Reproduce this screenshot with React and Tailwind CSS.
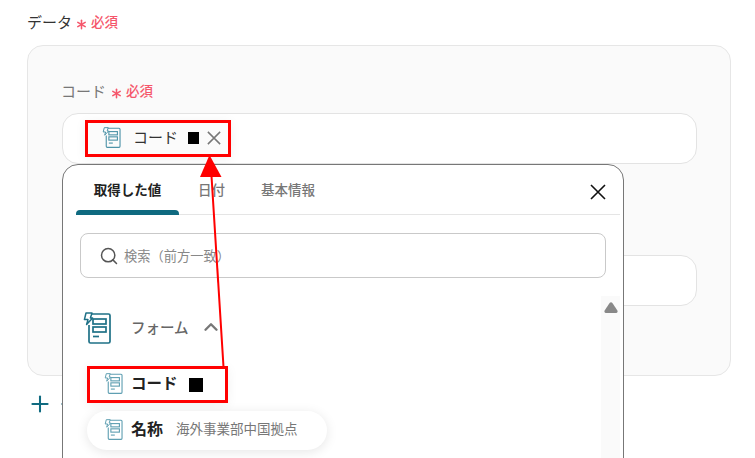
import React from "react";
import { ChevronUp, Plus, Search, Asterisk } from "lucide-react";

const font = { fontFamily: '"Noto Sans CJK JP", "Noto Sans", sans-serif' };

function FormIcon({ className }) {
  return (
    <svg viewBox="0 0 28 32" fill="none" className={className}>
      <path d="M8 2H25.5C26.6 2 27 2.6 27 3.5V29.5C27 30.4 26.4 31 25.5 31H7.5C6.5 31 6 30.4 6 29.5V13" stroke="currentColor" strokeWidth="1.7" strokeLinejoin="round" />
      <path d="M3 1H9L7.4 6H9.6L3.6 12.5L5 7.6H1.4L3 1Z" fill="#fff" stroke="currentColor" strokeWidth="1.5" strokeLinejoin="round" />
      <rect x="10" y="7" width="13" height="5" stroke="currentColor" strokeWidth="1.7" />
      <rect x="10" y="15" width="13" height="5" stroke="currentColor" strokeWidth="1.7" />
      <path d="M10 24.5H16" stroke="currentColor" strokeWidth="1.7" />
    </svg>
  );
}

function CloseIcon({ className, strokeWidth }) {
  return (
    <svg viewBox="0 0 16 16" fill="none" className={className}>
      <path d="M1 1L15 15M15 1L1 15" stroke="currentColor" strokeWidth={strokeWidth} />
    </svg>
  );
}

function Required() {
  return (
    <span className="flex items-center text-[13.5px] font-medium text-[#f5566b] leading-none">
      <Asterisk className="w-[17px] h-[17px] -ml-[1px] mr-[1px] mt-[4px]" strokeWidth={2.2} />
      必須
    </span>
  );
}

export default function App() {
  return (
    <div style={font} className="relative w-[755px] h-[458px] overflow-hidden bg-white text-[#333]">
      <div className="pl-[27px] pt-[11px] w-[731px]">
        <div className="flex items-center gap-[2px] h-[22px] text-[15px] text-[#333]">
          データ
          <Required />
        </div>

        <div className="mt-[12px] h-[331px] rounded-[16px] border border-[#e6e6e6] bg-[#fafafa] pl-[34px] pr-[33px] pt-[34px]">
          <div className="flex items-center gap-[3px] h-[22px] text-[15px] text-[#777]">
            <span className="-ml-[1px]">コード</span>
            <Required />
          </div>
          <div className="mt-[11px] flex items-center h-[51px] rounded-[16px] border border-[#e3e3e3] bg-white pl-[22px]">
            <div className="flex items-center w-[146px] h-[37px] border-[3px] border-[#f00] bg-[#fbfbfb] pl-[14px] pb-[2px] shadow-[0_2px_12px_rgba(0,0,0,0.06)]">
              <FormIcon className="w-[19px] h-[21px] text-[#4d93a8]" />
              <span className="ml-[12px] text-[15px] leading-none pb-[2px] text-[#333]">コード</span>
              <span className="ml-[10px] w-[11px] h-[12px] bg-black" />
              <CloseIcon className="ml-[8px] w-[14px] h-[14px] text-[#777]" strokeWidth={1.7} />
            </div>
          </div>
          <div className="mt-[91px] h-[51px] rounded-[16px] border border-[#e3e3e3] bg-white" />
        </div>

        <div className="mt-[15px] flex items-center">
          <Plus className="w-[26px] h-[26px] text-[#0f6a80]" strokeWidth={1.9} />
          <span className="ml-[8px] w-[1px] h-[2px] bg-[#9bbcc6]" />
        </div>
      </div>

      {/* variable picker popup */}
      <div className="absolute left-[62px] top-[164px] w-[562px] h-[310px] rounded-t-[16px] border border-[#777] bg-white">
        <div className="relative flex h-[50px] ml-[13px] mr-[3px] border-b border-[#e5e5e5] text-[13.5px] font-medium">
          <div className="relative w-[103px] flex items-center justify-center text-[#222] font-bold">
            取得した値
            <span className="absolute left-0 -bottom-px w-[103px] h-[5px] rounded-t-[4px] bg-[#0f6a80]" />
          </div>
          <div className="ml-[19px] flex items-center text-[#777]">日付</div>
          <div className="ml-[36px] flex items-center text-[#777]">基本情報</div>
          <CloseIcon className="absolute right-[14px] top-[19px] w-[16px] h-[16px] text-[#111]" strokeWidth={1.6} />
        </div>

        <div className="mt-[18px] ml-[17px] w-[526px] h-[45px] flex items-center rounded-[8px] border border-[#c9c9c9] pl-[18px] text-[13.25px] text-[#888]">
          <Search className="w-[20px] h-[20px] text-[#555]" strokeWidth={1.8} />
          <span className="ml-[5px]">検索（前方一致）</span>
        </div>

        <div className="relative mt-[34px] ml-[20px] flex items-center h-[32px]">
          <FormIcon className="w-[28px] h-[32px] text-[#1f7187]" />
          <span className="ml-[20px] text-[14.5px] font-medium text-[#666] pb-[3px]">フォーム</span>
          <ChevronUp className="ml-[11px] mb-[2px] w-[22px] h-[22px] text-[#777]" strokeWidth={2.6} />
        </div>

        <div className="absolute right-[3px] top-[131px] bottom-0 w-[19px] bg-[#fafafa] flex justify-center pt-[6px]">
          <svg viewBox="0 0 14 11" className="w-[14px] h-[11px]" fill="#888">
            <path d="M5.6 1C6.3 0 7.7 0 8.4 1L13.4 8.6C14 9.6 13.5 11 12.2 11H1.8C0.5 11 0 9.6 0.6 8.6Z" />
          </svg>
        </div>

        <div className="ml-[24px] mt-[22px] flex items-center w-[141px] h-[37px] border-[3px] border-[#f00] bg-white pl-[14px] pb-[2px] shadow-[0_2px_12px_rgba(0,0,0,0.06)]">
          <FormIcon className="w-[19px] h-[21px] text-[#5f9fb2]" />
          <span className="ml-[8px] text-[15.5px] leading-none pb-[2px] font-bold text-[#222]">コード</span>
          <span className="ml-[11px] mt-[2px] w-[14px] h-[14px] bg-black" />
        </div>

        <div className="ml-[24px] mt-[8px] flex items-center w-[240px] h-[39px] rounded-full bg-white pl-[17px] pb-[3px] shadow-[0_2px_12px_rgba(0,0,0,0.1)]">
          <FormIcon className="w-[19px] h-[21px] text-[#5f9fb2]" />
          <span className="ml-[8px] text-[16px] leading-none pb-[2px] font-bold text-[#222]">名称</span>
          <span className="ml-[13px] text-[13.5px] leading-none text-[#777]">海外事業部中国拠点</span>
        </div>
      </div>

      {/* red annotation arrow */}
      <svg className="absolute left-0 top-0 pointer-events-none" width="755" height="458" fill="none">
        <path d="M223.5 367L211.5 176" stroke="#f00" strokeWidth="2" />
        <path d="M209.5 155L221.5 177H200Z" fill="#f00" />
      </svg>
    </div>
  );
}
